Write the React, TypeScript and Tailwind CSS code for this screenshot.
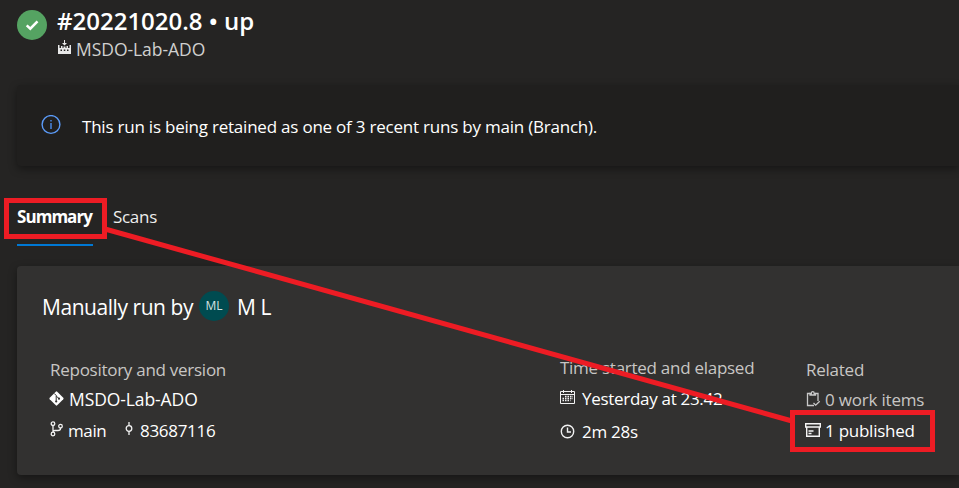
import type { ReactNode } from 'react';

function Row({ icon, children, className }: { icon: ReactNode; children: ReactNode; className: string }) {
  return (
    <div className={`flex h-6 items-start ${className}`}>
      {icon}
      <span>{children}</span>
    </div>
  );
}

const FactoryIcon = () => (
  <svg width="15" height="15" viewBox="0 0 15 15" fill="#e8e8e8" className="mt-[3px] shrink-0">
    <path d="M7 0h1v3h2L7.500 5.500 5 3h2zM1 5h1.500v3h1.500V6h1.500v2h1V6.500h2V8h1V6H11v2h1.500V5H14v9H1z" />
    <path d="M3.500 9.500H5V11H3.500zM6.800 9.500h1.500V11H6.800zM10 9.500h1.500V11H10z" fill="#252423" />
  </svg>
);

const InfoIcon = () => (
  <svg width="20" height="20" viewBox="0 0 20 20" className="mt-[30px] shrink-0">
    <circle cx="10" cy="9.500" r="8.900" fill="none" stroke="#5b9bf8" strokeWidth="1.400" />
    <path d="M9.300 5h1.400v1.500H9.300zM9.300 8h1.400v6H9.300z" fill="#4c8ef0" />
  </svg>
);

const GitIcon = () => (
  <svg width="15" height="15" viewBox="0 0 15 15" className="mt-[4px] -ml-px mr-px shrink-0">
    <rect x="2.200" y="2.200" width="10.600" height="10.600" rx="1" transform="rotate(45 7.500 7.500)" fill="#fff" />
    <path d="M5.300 2.500 7.200 4.500v6M7.200 5l2.800 2.600" stroke="#323130" strokeWidth="1" fill="none" />
    <circle cx="7.200" cy="10.500" r="1.100" fill="#323130" />
    <circle cx="10" cy="7.700" r="1.100" fill="#323130" />
  </svg>
);

const BranchIcon = () => (
  <svg width="14" height="16" viewBox="0 0 14 16" fill="none" stroke="#f2f2f2" strokeWidth="1.300" className="mt-[2px] shrink-0">
    <circle cx="3" cy="2.700" r="1.800" />
    <circle cx="3" cy="13" r="1.800" />
    <circle cx="10.500" cy="5.200" r="1.800" />
    <path d="M3 4.500v6.700M10.500 7v.5Q10.500 9.500 8 9.500H5Q3 9.500 3 11.200" />
  </svg>
);

const CommitIcon = () => (
  <svg width="8" height="15" viewBox="0 0 8 15" fill="none" stroke="#f2f2f2" strokeWidth="1.300" className="mt-[2px] shrink-0">
    <circle cx="4" cy="7.500" r="2.800" />
    <path d="M4 1v3.700M4 10.300V14" />
  </svg>
);

const CalendarIcon = () => (
  <svg width="16" height="15" viewBox="0 0 16 15" fill="none" stroke="#f2f2f2" strokeWidth="1" className="mt-[3px] shrink-0">
    <path d="M.5 1.500h14v12H.5zM.5 4.500h14M3.500 0v3M11.500 0v3" />
    <path d="M5 6.500h8M2.500 8.500h10.500M2.500 10.500h8" strokeWidth="1.700" strokeDasharray="1.500 1" />
  </svg>
);

const ClockIcon = () => (
  <svg width="15" height="15" viewBox="0 0 15 15" fill="none" stroke="#f2f2f2" strokeWidth="1.400" className="mt-[4px] shrink-0">
    <circle cx="7.500" cy="7.500" r="6.200" />
    <path d="M7.500 3.500V8H11" />
  </svg>
);

const ClipboardIcon = () => (
  <svg width="15" height="16" viewBox="0 0 15 16" fill="none" stroke="#c8c8c8" strokeWidth="1.300" className="mt-[3px] shrink-0">
    <path d="M4 2.500H1.500v12H8M9.500 2.500h2.500V10" />
    <path d="M4 4V2.500h1.300Q5.300.7 6.750.7t1.450 1.800h1.300V4z" />
    <path d="m7.500 12 2.200 2.200 4-4" />
  </svg>
);

const ArchiveIcon = () => (
  <svg width="16" height="14" viewBox="0 0 16 14" fill="none" stroke="#f5f5f5" strokeWidth="1.400" className="mt-[4px] -ml-px shrink-0">
    <path d="M.7.700h14.600v3.300H.7zM1.700 4v9.300h12.600V4M3.500 8h5M3.500 10.500h3" />
  </svg>
);

export default function App() {
  return (
    <div className="relative h-[488px] w-[959px] overflow-hidden bg-[#252423] font-['Open_Sans','Noto_Sans',sans-serif] text-[17px] leading-6 whitespace-nowrap text-white">
      <header className="flex h-[85px] pt-[10px] pl-[17px]">
        <svg width="30" height="30" viewBox="0 0 30 30" className="shrink-0">
          <circle cx="15" cy="15" r="15" fill="#55a362" />
          <path d="m9.700 15.300 3.600 3.400 7.200-7.400" fill="none" stroke="#fff" strokeWidth="2.500" />
        </svg>
        <div className="ml-[10px] -mt-[5px]">
          <h1 className="h-8 text-[24px] leading-8 font-semibold">#20221020.8 • up</h1>
          <Row icon={<FactoryIcon />} className="gap-1 text-[17.5px] text-[#d0d0cf] tracking-[-0.05px]">MSDO-Lab-ADO</Row>
        </div>
      </header>

      <section className="ml-[17px] flex h-[81px] rounded-l-[4px] bg-[#201f1e] pl-6 shadow-[0_3px_8px_rgba(0,0,0,0.4)]">
        <InfoIcon />
        <p className="mt-[30px] ml-[21px] tracking-[-0.22px]">This run is being retained as one of 3 recent runs by main (Branch).</p>
      </section>

      <nav className="mt-[39px] ml-[17px] flex h-[41px] gap-[20px]">
        <span className="w-[76px] border-b-2 border-[#0078d4] font-bold tracking-[-0.95px]">Summary</span>
        <span className="tracking-[-0.3px] text-[#eeeeee]">Scans</span>
      </nav>

      <main className="mt-[20px] ml-[17px] h-[209px] rounded-l-[4px] bg-[#323130] pt-[25px] pl-[25px] shadow-[0_3px_8px_rgba(0,0,0,0.4)]">
        <div className="flex h-[30px] text-[21px] leading-[32px]">
          <span className="w-[157px] tracking-[-0.45px]">Manually run by</span>
          <span className="flex size-[30px] items-center justify-center rounded-full bg-[#004b50] text-[12px] text-[#d5e2e2]">ML</span>
          <span className="ml-[8px] tracking-[-0.4px]">M L</span>
        </div>
        <div className="mt-[37px] ml-[8px] flex">
          <div className="w-[510px]">
            <h2 className="text-[#c8c6c4] tracking-[-0.27px]">Repository and version</h2>
            <Row icon={<GitIcon />} className="mt-[5px] gap-1 text-[17.5px] tracking-[-0.1px]">MSDO-Lab-ADO</Row>
            <div className="mt-[8px] flex">
              <Row icon={<BranchIcon />} className="w-[75px] gap-[4px] tracking-[-0.4px]">main</Row>
              <Row icon={<CommitIcon />} className="gap-[7px] tracking-[-0.3px]">83687116</Row>
            </div>
          </div>
          <div className="-mt-[2px] w-[247px]">
            <h2 className="text-[#c8c6c4] tracking-[-0.27px]">Time started and elapsed</h2>
            <Row icon={<CalendarIcon />} className="mt-[7px] gap-[6px] tracking-[-0.3px]">Yesterday at 23.42</Row>
            <Row icon={<ClockIcon />} className="mt-[9px] gap-[7px] tracking-[-0.25px]">2m 28s</Row>
          </div>
          <div className="-ml-px">
            <h2 className="text-[#c8c6c4] tracking-[-0.25px]">Related</h2>
            <Row icon={<ClipboardIcon />} className="mt-[6px] gap-[4px] text-[#c8c6c4] tracking-[-0.2px]">0 work items</Row>
            <Row icon={<ArchiveIcon />} className="mt-[7px] gap-[4px] tracking-[-0.25px]">1 published</Row>
          </div>
        </div>
      </main>

      <svg width="959" height="488" viewBox="0 0 959 488" className="pointer-events-none absolute inset-0" fill="none" stroke="#ed1c24" strokeWidth="5">
        <rect x="6.500" y="200.500" width="98" height="36" />
        <rect x="792.500" y="412.500" width="140" height="37" />
        <path d="M105 229 792 421" />
      </svg>
    </div>
  );
}
